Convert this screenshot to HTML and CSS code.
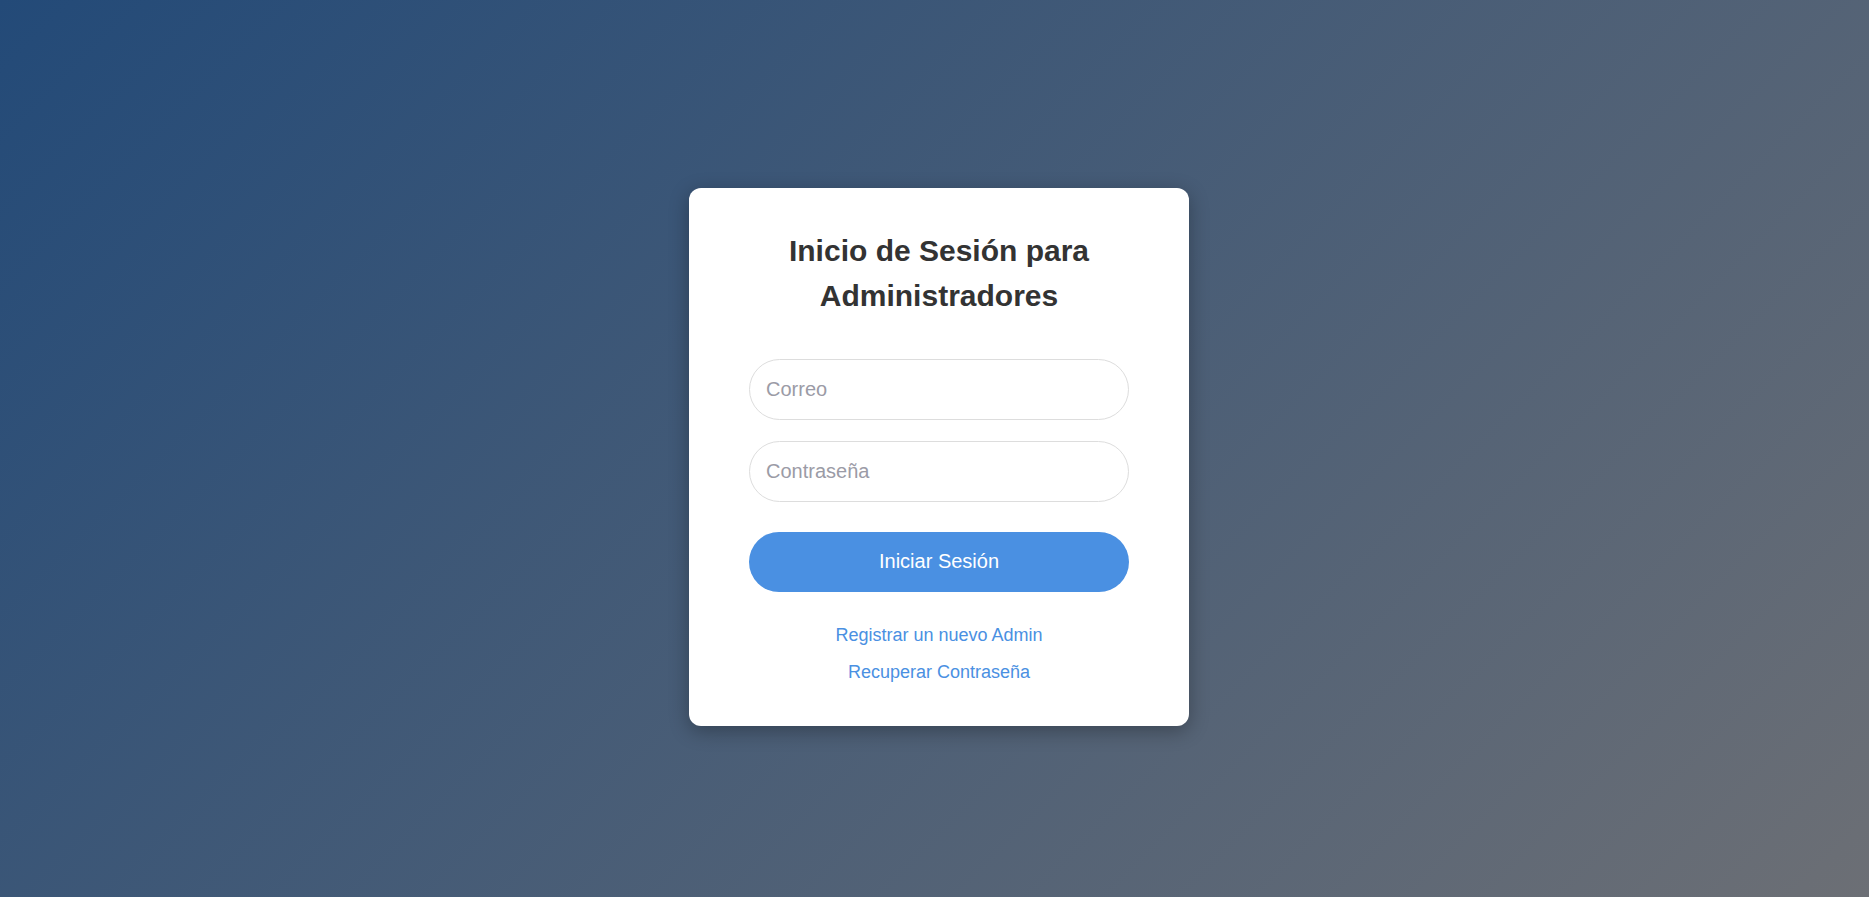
FILE: index.html
```html
<!DOCTYPE html>
<html lang="es">
<head>
<meta charset="utf-8">
<title>Inicio de Sesión para Administradores</title>
<link rel="stylesheet" href="styles.css">
</head>
<body>
<main class="page">
  <section class="card">
    <h1 class="title">Inicio de Sesión para Administradores</h1>
    <form class="form">
      <input class="field" type="email" placeholder="Correo">
      <input class="field field-last" type="password" placeholder="Contraseña">
      <button class="btn" type="button">Iniciar Sesión</button>
    </form>
    <nav class="links">
      <a class="link" href="#">Registrar un nuevo Admin</a>
      <a class="link" href="#">Recuperar Contraseña</a>
    </nav>
  </section>
</main>
</body>
</html>
```

FILE: styles.css
```css
html, body {
  margin: 0;
  padding: 0;
}

body {
  font-family: "Liberation Sans", Arial, sans-serif;
  background: linear-gradient(135deg, #234a78, #6c6f75);
  min-height: 100vh;
}

.page {
  box-sizing: border-box;
  min-height: 100vh;
  display: flex;
  align-items: center;
  justify-content: center;
  padding: 16px 0 0 9px;
}

.card {
  box-sizing: border-box;
  width: 500px;
  padding: 40px 60px 44px;
  background: #fff;
  border-radius: 12px;
  box-shadow: 0 5px 20px rgba(0, 0, 0, 0.3);
  text-align: center;
}

.title {
  margin: 0 0 41px;
  font-size: 30px;
  line-height: 45px;
  font-weight: bold;
  color: #333;
}

.form {
  display: flex;
  flex-direction: column;
  margin: 0;
}

.field {
  box-sizing: border-box;
  width: 100%;
  height: 61px;
  margin: 0 0 21px;
  padding: 0 16px;
  border: 1px solid #dddddd;
  border-radius: 31px;
  font-family: "Liberation Sans", Arial, sans-serif;
  font-size: 20px;
  color: #333;
  background: #fff;
  outline: none;
}

.field::placeholder {
  color: #9b9ba6;
}

.field-last {
  margin-bottom: 30px;
}

.btn {
  box-sizing: border-box;
  width: 100%;
  height: 60px;
  border: none;
  border-radius: 30px;
  background: #4a90e2;
  color: #fff;
  font-family: "Liberation Sans", Arial, sans-serif;
  font-size: 20px;
  cursor: pointer;
}

.links {
  display: flex;
  flex-direction: column;
  align-items: center;
  gap: 17px;
  margin-top: 33px;
}

.link {
  display: block;
  font-size: 18px;
  line-height: 20px;
  color: #4a90e2;
  text-decoration: none;
}
```
